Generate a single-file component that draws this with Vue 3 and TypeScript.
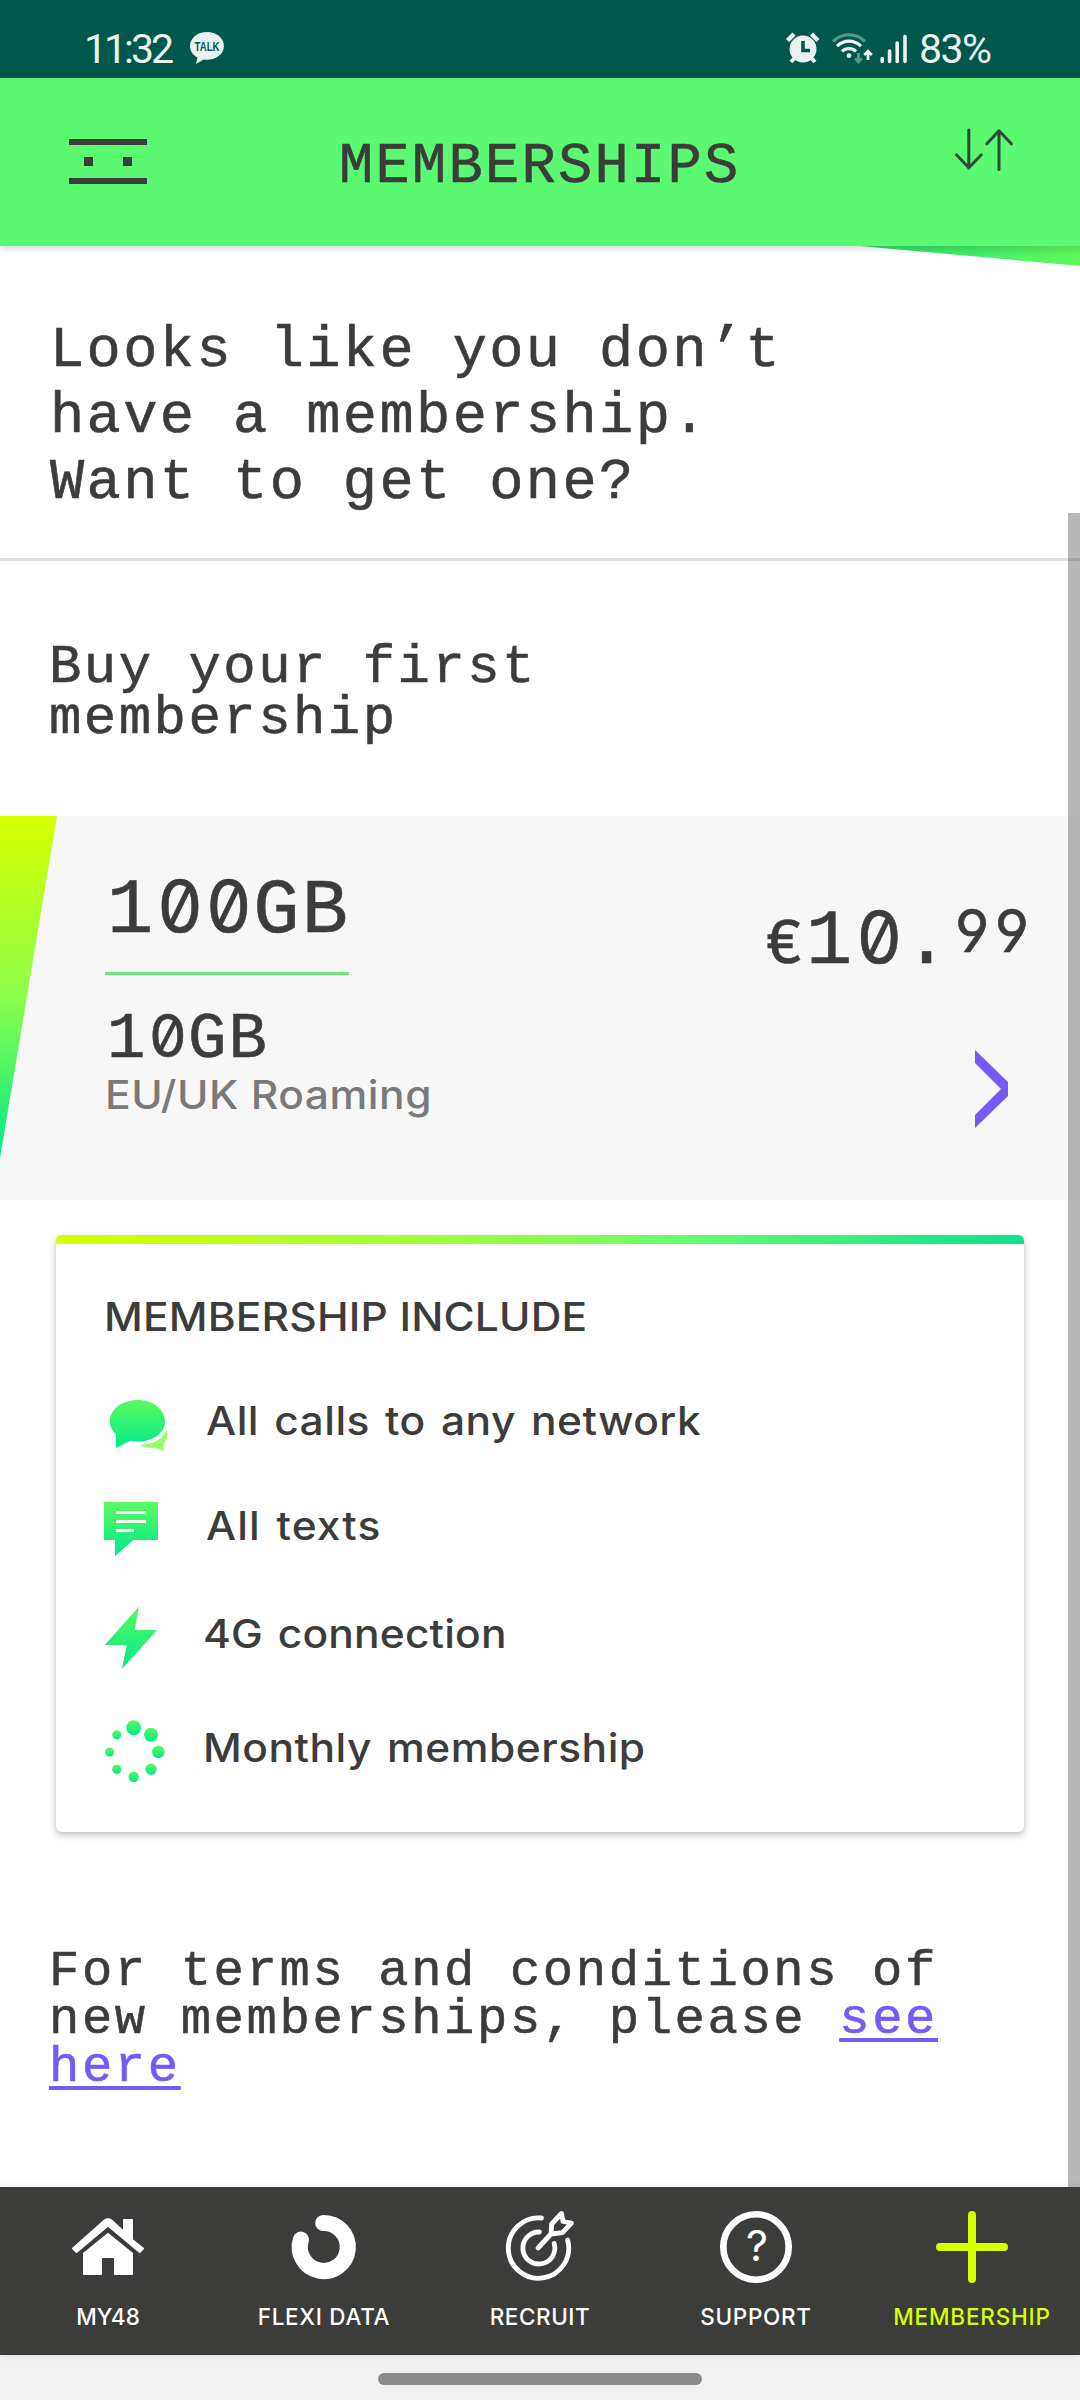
<script setup lang="ts">
interface Tab {
  id: string
  label: string
  spacing: number
}

interface Dot {
  x: number
  y: number
  r: number
}

const tabs: Tab[] = [
  { id: 'home', label: 'MY48', spacing: 0 },
  { id: 'flexi', label: 'FLEXI DATA', spacing: 0.7 },
  { id: 'recruit', label: 'RECRUIT', spacing: 0.55 },
  { id: 'support', label: 'SUPPORT', spacing: 0.7 },
  { id: 'member', label: 'MEMBERSHIP', spacing: 0.8 },
]

const dots: Dot[] = [
  { x: 33.7, y: 28.7, r: 7.5 },
  { x: 51, y: 35.7, r: 7 },
  { x: 58.3, y: 53, r: 6.2 },
  { x: 51, y: 70.3, r: 5.7 },
  { x: 33.7, y: 77.7, r: 5.2 },
  { x: 16.8, y: 70.3, r: 4.6 },
  { x: 9.6, y: 53, r: 4.5 },
  { x: 16.8, y: 35.7, r: 4.5 },
]
</script>

<template>
  <div class="screen">
    <div class="status">
      <span class="clock">11:32</span>
      <svg class="talk" width="36" height="36" viewBox="0 0 36 36">
        <path d="M18 1C8.500 1 1 7.200 1 15c0 5 3 9.200 7.500 11.600L7 33l7.500-4.600c1.200.3 2.300.4 3.500.4 9.500 0 17-6 17-13.800S27.500 1 18 1z" fill="#e9f2f1" />
        <text x="18" y="19.500" text-anchor="middle" textLength="25" lengthAdjust="spacingAndGlyphs" class="talk-text">TALK</text>
      </svg>
      <svg class="sys" width="124" height="36" viewBox="785 31 124 36">
        <g fill="#e9f2f1">
          <circle cx="803" cy="49" r="13.500" />
          <g stroke="#e9f2f1" stroke-width="4.500">
            <path d="M787.500 40.500l6.500-6.500M811.500 34l6.500 6.500" />
            <path d="M795.500 57l-4.500 5M810.500 57l4.500 5" stroke-width="4" />
          </g>
          <path d="M803 41v9.500h7" fill="none" stroke="#00584c" stroke-width="3.600" />
        </g>
        <g fill="none" stroke="#e9f2f1" stroke-width="3.200">
          <path d="M833 41.500c9-9 23-9 32 0" opacity=".4" />
          <path d="M837 46.200c7-6.800 17-6.800 24 0" />
          <path d="M842 51.400c4-3.800 10-3.800 14 0" />
          <path d="M858.500 53v8.500M855 58.500l3.500 3.500 3.500-3.500" opacity=".4" stroke-width="2.800" />
          <path d="M868 60v-8.500M864.200 55l3.800-3.800 3.800 3.800" stroke-width="2.800" />
        </g>
        <circle cx="849" cy="55.700" r="2.400" fill="#e9f2f1" />
        <g stroke="#e9f2f1" stroke-width="3.600" stroke-linecap="round">
          <path d="M882.200 58.500v3M889.600 51v10.500M897.200 43v18.500M905 36.500v25" />
        </g>
      </svg>
      <span class="battery">83%</span>
    </div>

    <header class="bar">
      <svg class="menu" width="78" height="46" viewBox="0 0 78 46" fill="#3c3c3b">
        <path d="M0 0h78v6H0zM0 39h78v6H0zM15 18h9v9h-9zM54 18h9v9h-9z" />
      </svg>
      <h1 class="title">MEMBERSHIPS</h1>
      <svg class="swap" width="60" height="44" viewBox="954 128 60 44" fill="none" stroke="#2f4a35" stroke-width="3" stroke-linecap="round" stroke-linejoin="round">
        <path d="M968.800 130v38M956.500 154.800l12.300 13 12.500-13" />
        <path d="M999 169.500v-38.500M986.800 143.800l12.200-13 12.400 13" />
      </svg>
      <svg class="wedge" width="220" height="20" viewBox="0 0 220 20">
        <defs>
          <linearGradient id="wedge-fill" x1="0" y1="0" x2="1" y2="0">
            <stop offset="0" stop-color="#2fdc6c" />
            <stop offset=".5" stop-color="#42ee68" />
            <stop offset="1" stop-color="#60fa5e" />
          </linearGradient>
          <linearGradient id="wedge-shade" x1="0" y1="0" x2="0" y2="1">
            <stop offset="0" stop-color="#000" stop-opacity=".12" />
            <stop offset=".5" stop-color="#000" stop-opacity="0" />
          </linearGradient>
        </defs>
        <path d="M0 0h220v20z" fill="url(#wedge-fill)" />
        <path d="M0 0h220v20z" fill="url(#wedge-shade)" />
      </svg>
    </header>

    <main class="content">
      <section class="intro mono">Looks like you don’t<br>have a membership.<br>Want to get one?</section>
      <h2 class="buy mono">Buy your first<br>membership</h2>

      <section class="plan">
        <svg class="slant" width="57" height="342" viewBox="0 0 57 342">
          <defs>
            <linearGradient id="slant-fill" x1="0" y1="0" x2="0" y2="1">
              <stop offset="0" stop-color="#d6ff00" />
              <stop offset=".52" stop-color="#8dff4a" />
              <stop offset="1" stop-color="#00e888" />
            </linearGradient>
          </defs>
          <path d="M0 0h57L0 342z" fill="url(#slant-fill)" />
        </svg>
        <div class="allowance">
          <div class="quota mono">1<span class="zero">0</span><span class="zero">0</span>GB</div>
          <div class="roam mono">1<span class="zero">0</span>GB</div>
          <div class="roam-label"><span class="m">EU/UK Roaming</span></div>
        </div>
        <div class="cost">
          <div class="price mono"><span class="euro">€</span><span class="big">1<span class="zero">0</span>.</span><span class="cents">99</span></div>
          <svg class="chev" width="33" height="78" viewBox="0 0 33 78">
            <path d="M0 0l33 32v14L0 78V65l26-26L0 13z" fill="#7759f6" />
          </svg>
        </div>
      </section>

      <section class="card">
        <h3 class="card-title"><span class="m">MEMBERSHIP INCLUDE</span></h3>
        <ul class="perks">
          <li>
            <svg width="100" height="100" viewBox="100 1372 100 100">
              <defs>
                <linearGradient id="perk-fill" x1="0" y1="0" x2="0" y2="1">
                  <stop offset="0" stop-color="#5cf95f" />
                  <stop offset="1" stop-color="#00e98b" />
                </linearGradient>
              </defs>
              <path d="M137.500 1400c15.500 0 27.500 9.500 27.500 21.500s-12 20-27.500 20c-2.500 0-5-.3-7.500-.8l-14 7.300v-13.800c-4-3.500-6.200-8-6.200-12.700 0-12 12.200-21.500 27.700-21.500z" fill="url(#perk-fill)" />
              <path d="M166.500 1430c1.800 4.700.6 9.500-2.800 13.300v8l-8.500-3.800c-6 .6-12-.4-16.200-2.700 11.500.3 23.500-4.500 27.500-14.800z" fill="#96ff62" />
            </svg>
            <span class="m calls">All calls to any network</span>
          </li>
          <li>
            <svg width="100" height="100" viewBox="100 1477 100 100">
              <path d="M104 1502h54v38h-24.500L115 1556v-16h-11z" fill="url(#perk-fill)" />
              <path d="M116 1511h30v3h-30zM116 1520h30v3h-30zM116 1529h18v3h-18z" fill="#fff" />
            </svg>
            <span class="m texts">All texts</span>
          </li>
          <li>
            <svg width="100" height="100" viewBox="100 1585 100 100">
              <path d="M139 1606.500l-4.400 23.500H157l-35 39 4.700-24h-22z" fill="url(#perk-fill)" />
            </svg>
            <span class="m speed">4G connection</span>
          </li>
          <li>
            <svg width="100" height="100" viewBox="0 0 100 100">
              <circle v-for="(d, i) in dots" :key="i" :cx="d.x" :cy="d.y" :r="d.r" fill="url(#perk-fill)" />
            </svg>
            <span class="m monthly">Monthly membership</span>
          </li>
        </ul>
      </section>

      <p class="terms mono">For terms and conditions of<br>new memberships, please <a>see</a><br><a>here</a></p>
      <div class="scroll"></div>
    </main>

    <nav class="tabs">
      <div v-for="t in tabs" :key="t.id" class="tab" :class="{ active: t.id === 'member' }">
        <svg v-if="t.id === 'home'" width="76" height="76" viewBox="70 2209 76 76" fill="#fff" stroke="#fff" stroke-linejoin="round">
          <path d="M73 2248.500l31.500-28q3.500-2.500 7 0l12.500 11.500V2220h8v19.800l11 8.700-3.300 3.500L108 2225.500l-31.500 26.500z" stroke-width="2" />
          <path d="M108 2234l24 19.500v20.500h-17v-17h-14v17H84v-20.500z" stroke-width="2" />
        </svg>
        <svg v-else-if="t.id === 'flexi'" width="76" height="76" viewBox="286 2209 76 76">
          <path d="M323.200 2223A24 24 0 1 1 300.900 2239.700" fill="none" stroke="#fff" stroke-width="16.200" stroke-linecap="round" />
        </svg>
        <svg v-else-if="t.id === 'recruit'" width="76" height="76" viewBox="502 2209 76 76" fill="none" stroke="#fff" stroke-width="4.800" stroke-linecap="round" stroke-linejoin="round">
          <path d="M541.500 2218A30.200 30.200 0 1 0 567.600 2240" />
          <path d="M539.500 2232A16 16 0 1 0 554.200 2243.500" />
          <path d="M538 2248l13-14M551 2234l.7-10 9.800-10.500 1.500 8 8.500 1.500-9 9.700z" />
        </svg>
        <svg v-else-if="t.id === 'support'" width="76" height="76" viewBox="718 2209 76 76">
          <circle cx="756" cy="2247" r="32.700" fill="none" stroke="#fff" stroke-width="6.600" />
          <text x="757" y="2260.500" text-anchor="middle" class="q">?</text>
        </svg>
        <svg v-else width="76" height="76" viewBox="934 2209 76 76">
          <path d="M972 2215v64M940 2247h64" stroke="#d6ff00" stroke-width="8" stroke-linecap="round" />
        </svg>
        <span class="tab-label" :style="{ letterSpacing: t.spacing + 'px' }">{{ t.label }}</span>
      </div>
    </nav>
    <div class="gesture"><div class="handle"></div></div>
  </div>
</template>

<style>
body {
  margin: 0;
  background: #fff;
}
</style>

<style scoped>
.screen {
  width: 1080px;
  height: 2400px;
  display: flex;
  flex-direction: column;
  overflow: hidden;
  background: #fff;
  color: #3c3c3b;
  font-family: Inter, "Open Sans", sans-serif;
}
h1, h2, h3, p, ul {
  margin: 0;
  padding: 0;
  font-weight: 400;
}
.mono, .title {
  font-family: "Liberation Mono", monospace;
  -webkit-text-stroke: 0.6px currentColor;
}
.m {
  display: inline-block;
  transform: scaleX(1.09);
  transform-origin: 0 50%;
  font-weight: 450;
  white-space: nowrap;
}
.status {
  flex: none;
  height: 78px;
  background: #00584c;
  color: #e9f2f1;
  display: flex;
  align-items: flex-start;
  font-family: Roboto, sans-serif;
}
.clock, .battery {
  font-size: 41px;
  line-height: 50px;
  padding-top: 24px;
  letter-spacing: -1.5px;
  white-space: nowrap;
}
.clock {
  width: 105px;
  padding-left: 84px;
  letter-spacing: -3px;
}
.talk {
  margin-top: 31px;
}
.talk-text {
  font: 700 12.500px "Liberation Sans", sans-serif;
  fill: #00584c;
}
.sys {
  margin: 31px 0 0 560px;
}
.battery {
  margin-left: 10px;
}
.bar {
  flex: none;
  position: relative;
  z-index: 1;
  height: 168px;
  background: #5bf971;
  box-shadow: 0 1px 8px rgba(0, 0, 0, 0.22);
  display: flex;
  align-items: flex-start;
}
.menu {
  margin: 61px 0 0 69px;
}
.title {
  width: 403px;
  margin-left: 192px;
  padding-top: 5px;
  font-size: 57px;
  line-height: 168px;
  letter-spacing: 2.300px;
  white-space: nowrap;
}
.swap {
  margin: 50px 0 0 212px;
}
.wedge {
  position: absolute;
  right: 0;
  top: 168px;
}
.content {
  position: relative;
  flex: 1;
  min-height: 0;
}
.intro {
  height: 240px;
  padding: 72px 0 0 50px;
  border-bottom: 3px solid #e0e0e0;
  font-size: 57px;
  line-height: 66px;
  letter-spacing: 2.400px;
}
.buy {
  height: 174px;
  padding: 81px 0 0 49px;
  font-size: 54px;
  line-height: 51px;
  letter-spacing: 2.450px;
}
.plan {
  height: 384px;
  display: flex;
  background: #f7f7f7;
}
.slant {
  flex: none;
}
.allowance {
  width: 600px;
  padding: 56px 0 0 48px;
}
.quota {
  width: 242px;
  height: 100px;
  padding-left: 2px;
  border-bottom: 3px solid #6be77b;
  font-size: 77px;
  line-height: 80px;
  letter-spacing: 2.400px;
  white-space: nowrap;
}
.zero {
  display: inline-block;
  width: 48.800px;
  line-height: 0;
  letter-spacing: 0;
  text-align: center;
  font-family: Inter, sans-serif;
  font-size: 71px;
  font-feature-settings: "zero", "tnum";
}
.roam {
  margin-top: 35px;
  padding-left: 2px;
  font-size: 64px;
  line-height: 60px;
  letter-spacing: 2.100px;
}
.roam .zero {
  width: 40.500px;
  font-size: 59px;
}
.roam-label {
  color: #7a7a7a;
  font-size: 39px;
  line-height: 50px;
}
.roam-label .m {
  letter-spacing: 0.500px;
}
.cost {
  padding-top: 86px;
}
.price {
  display: flex;
  align-items: baseline;
  height: 148px;
  line-height: 80px;
  white-space: nowrap;
}
.euro {
  margin-left: 60px;
  width: 41px;
  font-size: 64px;
}
.big {
  width: 149px;
  font-size: 77px;
  letter-spacing: 2.600px;
}
.cents {
  position: relative;
  top: -11px;
  font-family: Inter, sans-serif;
  font-size: 59px;
  letter-spacing: 5.500px;
  font-feature-settings: "cv04";
}
.chev {
  display: block;
  margin-left: 270px;
}
.card {
  width: 968px;
  height: 588px;
  margin: 35px 0 0 56px;
  padding-top: 9px;
  border-radius: 6px;
  background: linear-gradient(90deg, #d6ff00, #8dff4a 50%, #5cf972 68%, #0ce28c) 0 0 / 100% 9px no-repeat #fff;
  box-shadow: 0 3px 7px rgba(0, 0, 0, 0.27);
}
.card-title {
  padding: 48px 0 0 48px;
  font-size: 39px;
  line-height: 50px;
}
.card-title .m {
  letter-spacing: 0.150px;
}
.perks {
  list-style: none;
  margin: 30px 0 0 44px;
}
.perks li {
  display: flex;
  align-items: center;
  height: 98px;
  padding-bottom: 2px;
  margin-bottom: 5px;
  font-size: 39px;
  line-height: 50px;
}
.perks li svg {
  flex: none;
  position: relative;
  top: 1px;
}
.perks li:nth-child(2) {
  margin-bottom: 8px;
}
.perks li:nth-child(3) {
  margin-bottom: 14px;
}
.perks .m {
  margin-left: 6px;
  word-spacing: 3px;
  letter-spacing: 0.450px;
}
.perks .texts {
  letter-spacing: 1px;
}
.perks .speed {
  margin-left: 3px;
  letter-spacing: 0.150px;
}
.perks .monthly {
  margin-left: 3px;
}
.terms {
  margin-top: 116px;
  padding-left: 49px;
  font-size: 50.500px;
  line-height: 48.200px;
  letter-spacing: 2.620px;
}
.terms a {
  color: #7759f6;
  text-decoration: underline;
  text-decoration-thickness: 4px;
  text-underline-offset: 5px;
  text-decoration-skip-ink: none;
}
.scroll {
  position: absolute;
  right: 0;
  top: 267px;
  bottom: 0;
  width: 12px;
  background: rgba(0, 0, 0, 0.28);
}
.tabs {
  flex: none;
  position: relative;
  height: 168px;
  display: grid;
  grid-template-columns: repeat(5, 216px);
  background: #3c3c3a;
  color: #fff;
  box-shadow: 0 0 8px rgba(0, 0, 0, 0.1);
}
.tab {
  display: flex;
  flex-direction: column;
  align-items: center;
  padding-top: 22px;
}
.tab-label {
  margin-top: 17px;
  font-size: 22.500px;
  line-height: 30px;
  font-weight: 500;
  white-space: nowrap;
}
.q {
  font: 400 43px Inter, sans-serif;
  fill: #fff;
}
.active {
  color: #d6ff00;
}
.gesture {
  flex: none;
  height: 45px;
  background: #f1f1f1;
}
.handle {
  width: 324px;
  height: 12px;
  margin: 18px auto 0;
  border-radius: 6px;
  background: #8a8a8a;
}
</style>
